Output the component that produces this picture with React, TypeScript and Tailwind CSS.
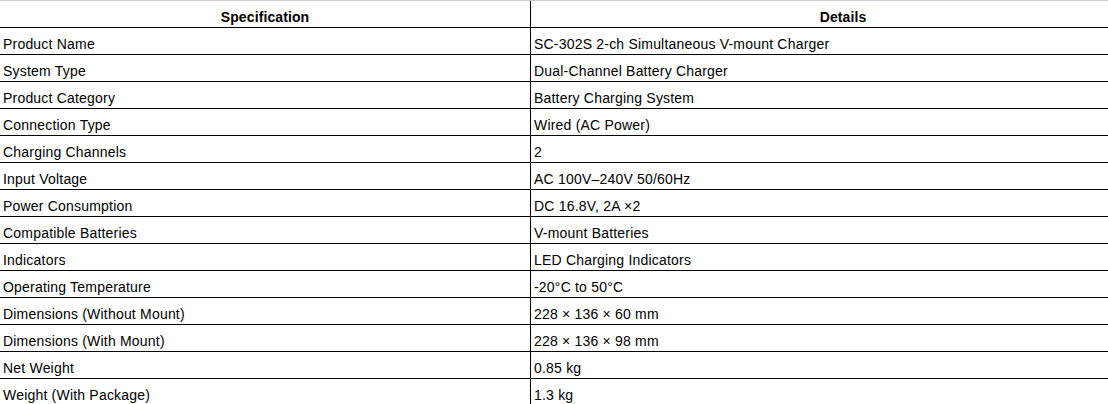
import React from "react";

const rows: [string, string][] = [
  ["Product Name", "SC-302S 2-ch Simultaneous V-mount Charger"],
  ["System Type", "Dual-Channel Battery Charger"],
  ["Product Category", "Battery Charging System"],
  ["Connection Type", "Wired (AC Power)"],
  ["Charging Channels", "2"],
  ["Input Voltage", "AC 100V–240V 50/60Hz"],
  ["Power Consumption", "DC 16.8V, 2A ×2"],
  ["Compatible Batteries", "V-mount Batteries"],
  ["Indicators", "LED Charging Indicators"],
  ["Operating Temperature", "-20°C to 50°C"],
  ["Dimensions (Without Mount)", "228 × 136 × 60 mm"],
  ["Dimensions (With Mount)", "228 × 136 × 98 mm"],
  ["Net Weight", "0.85 kg"],
  ["Weight (With Package)", "1.3 kg"],
];

export default function App() {
  return (
    <div
      className="w-[1108px] h-[404px] overflow-hidden bg-white text-black text-[14px] leading-[16px]"
      style={{ fontFamily: '"Liberation Sans", Arial, sans-serif' }}
    >
      <div className="w-[1155px] border-t border-[#cccccc]">
        <div className="flex h-[27px] border-b border-black font-bold tracking-[0.1px]">
          <div className="w-[531px] shrink-0 border-r border-black pt-[8px] text-center">
            Specification
          </div>
          <div className="flex-1 pt-[8px] text-center">Details</div>
        </div>
        {rows.map(([k, v]) => (
          <div key={k} className="flex h-[27px] border-b border-black tracking-[0.2px]">
            <div className="w-[531px] shrink-0 border-r border-black pt-[8px] pl-[3px] whitespace-nowrap">
              {k}
            </div>
            <div className="flex-1 pt-[8px] pl-[3px] whitespace-nowrap">{v}</div>
          </div>
        ))}
      </div>
    </div>
  );
}
